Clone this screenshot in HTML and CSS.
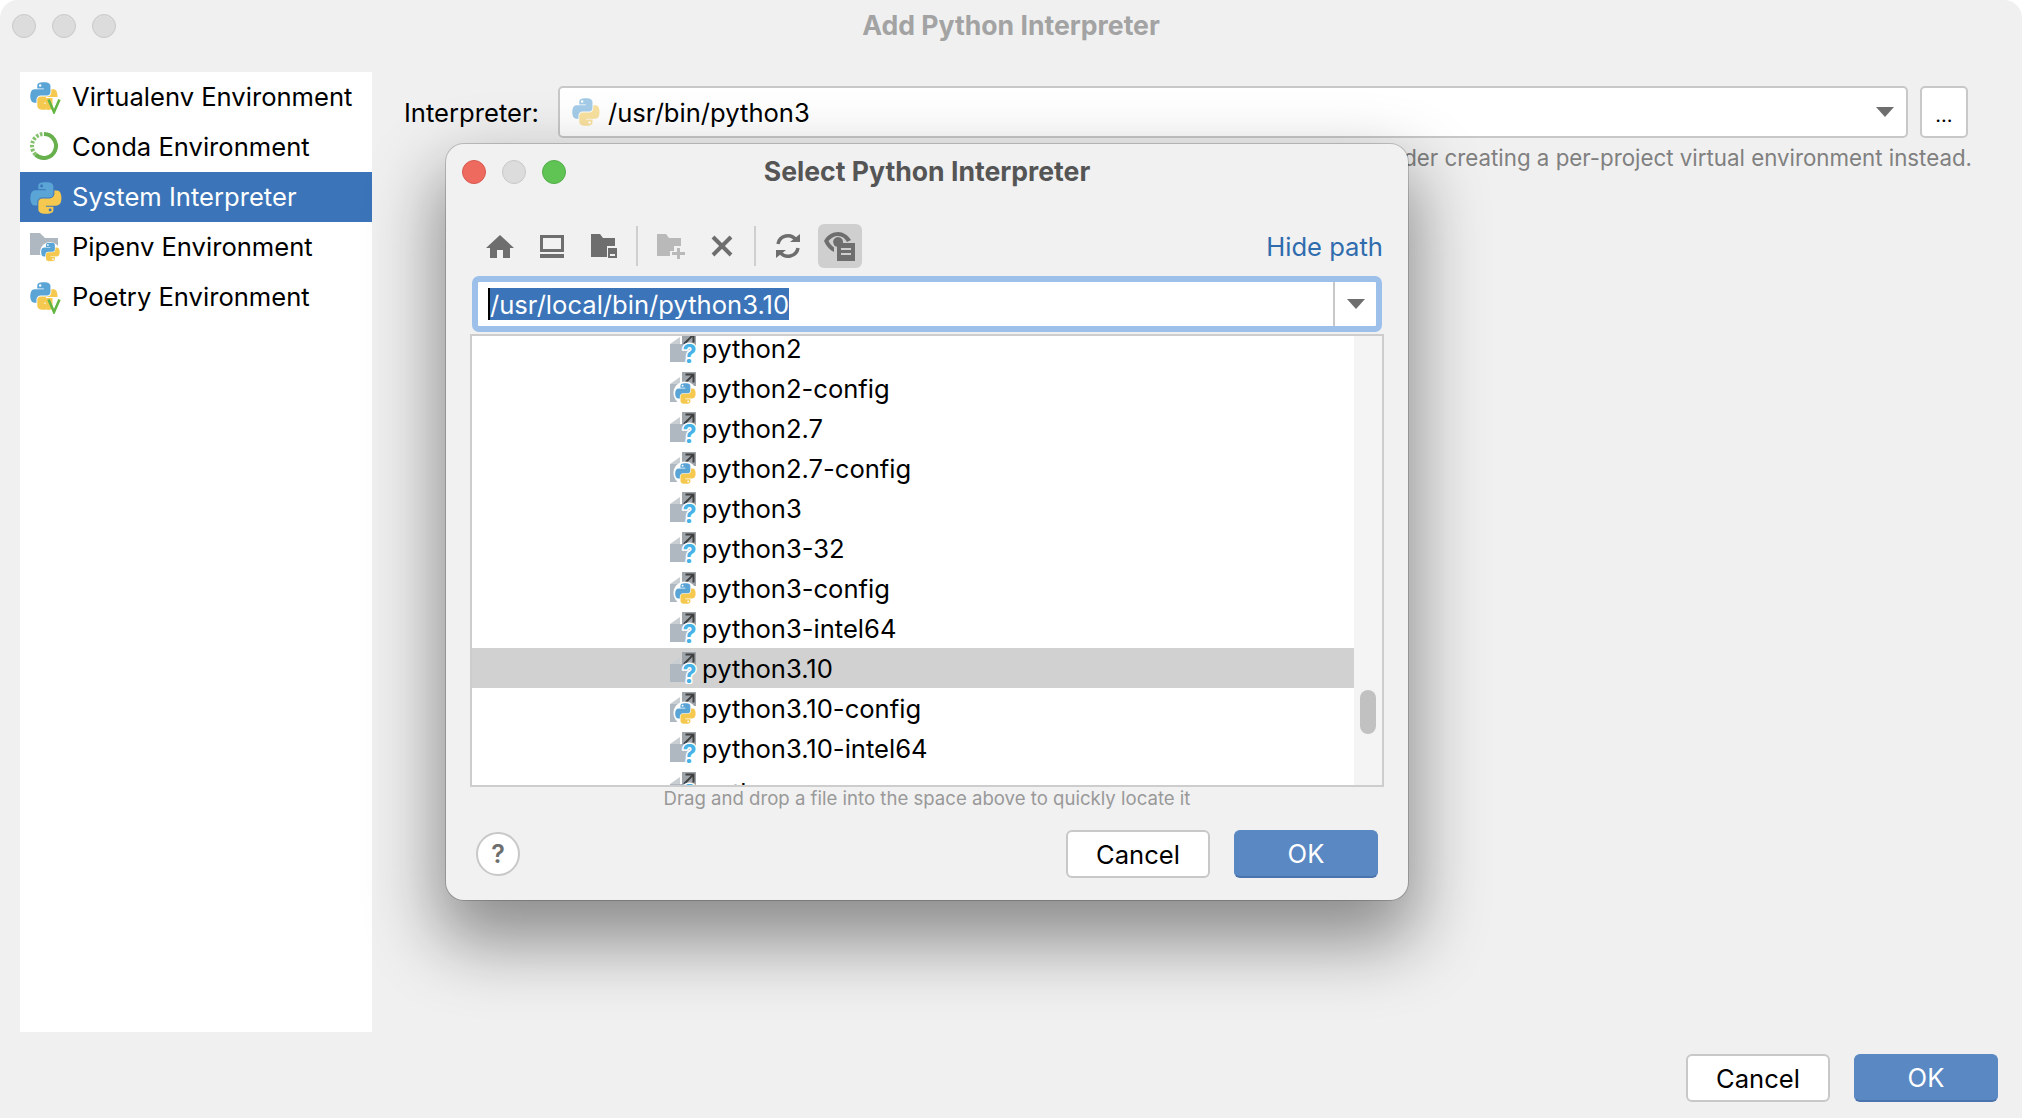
FILE: index.html
```html
<!DOCTYPE html>
<html lang="en">
<head>
<meta charset="utf-8">
<title>Add Python Interpreter</title>
<link rel="stylesheet" href="styles.css">
</head>
<body>
<svg class="defs" width="0" height="0" aria-hidden="true">
  <defs>
    <symbol id="py" viewBox="0 0 112 112">
      <path class="py-blue" fill-rule="evenodd" d="M54.9 .9C50.4 .9 46.1 1.3 42.3 2 31.1 4 29.1 8.1 29.1 15.7V25.8H55.5V29.2H19.3C11.6 29.2 4.9 33.8 2.8 42.5 .4 52.5 .3 58.8 2.8 69.2 4.7 77 9.1 82.6 16.8 82.6H25.8V70.5C25.8 61.8 33.4 54.1 42.3 54.1H68.6C75.9 54.1 81.8 48.1 81.8 40.8V15.7C81.8 8.6 75.8 3.2 68.6 2 63.5 1.2 59.3 .9 54.9 .9ZM40.6 9A5 5 0 1 1 40.6 19 5 5 0 1 1 40.6 9Z"/>
      <path class="py-yellow" fill-rule="evenodd" transform="rotate(180 55.5 56)" d="M54.9 .9C50.4 .9 46.1 1.3 42.3 2 31.1 4 29.1 8.1 29.1 15.7V25.8H55.5V29.2H19.3C11.6 29.2 4.9 33.8 2.8 42.5 .4 52.5 .3 58.8 2.8 69.2 4.7 77 9.1 82.6 16.8 82.6H25.8V70.5C25.8 61.8 33.4 54.1 42.3 54.1H68.6C75.9 54.1 81.8 48.1 81.8 40.8V15.7C81.8 8.6 75.8 3.2 68.6 2 63.5 1.2 59.3 .9 54.9 .9ZM40.6 9A5 5 0 1 1 40.6 19 5 5 0 1 1 40.6 9Z"/>
    </symbol>
    <symbol id="py-v" viewBox="0 0 32 32">
      <use href="#py" x="0" y="0" width="28" height="28"/>
      <path class="halo" d="M16 15H32V31H16Z"/>
      <path class="py-yellow" d="M16 16H22.500V25C22.500 27 21 28 18 28 17 28 16 27.500 16 26Z"/>
      <path class="v-mark" d="M18.500 17.500L24 30 29.500 17.500"/>
    </symbol>
    <symbol id="link-base" viewBox="0 0 28 32">
      <path class="doc-fold" d="M0 12L10 5V12Z"/>
      <path class="doc-body" d="M0 12H12V0H26V12H20V30H0Z"/>
      <path class="doc-box" d="M12 0H26V14H12Z"/>
      <path class="doc-arrow" d="M14 12L23 3M15.500 2.500H23.500V10.500"/>
    </symbol>
    <symbol id="file-unknown" viewBox="0 0 28 32">
      <use href="#link-base" width="28" height="32"/>
      <text class="q-mark" x="19.500" y="31">?</text>
    </symbol>
    <symbol id="file-py" viewBox="0 0 28 32">
      <use href="#link-base" width="28" height="32"/>
      <circle class="halo" cx="15" cy="21" r="11.500"/>
      <use href="#py" x="5" y="11" width="21" height="21"/>
    </symbol>
  </defs>
</svg>

<div class="window">
  <header class="titlebar">
    <div class="traffic">
      <span class="light"></span><span class="light"></span><span class="light"></span>
    </div>
    <div class="window-title">Add Python Interpreter</div>
  </header>

  <div class="body">
    <ul class="side">
      <li class="side-item"><svg class="ic-side"><use href="#py-v"/></svg><span>Virtualenv Environment</span></li>
      <li class="side-item">
        <svg class="ic-side" viewBox="0 0 32 32">
          <path class="conda-ring" d="M14 2A12 12 0 1 1 5.500 22.500"/>
          <path class="conda-dots" d="M5.500 22.500A12 12 0 0 1 14 2"/>
        </svg><span>Conda Environment</span></li>
      <li class="side-item is-selected"><svg class="ic-side"><use href="#py"/></svg><span>System Interpreter</span></li>
      <li class="side-item">
        <svg class="ic-side" viewBox="0 0 32 32">
          <path class="doc-body" d="M0 1H10L15 6H28V23H0Z"/>
          <circle class="halo" cx="20" cy="20" r="10"/>
          <use href="#py" x="11" y="10.500" width="19" height="19"/>
        </svg><span>Pipenv Environment</span></li>
      <li class="side-item"><svg class="ic-side"><use href="#py-v"/></svg><span>Poetry Environment</span></li>
    </ul>

    <section class="pane">
      <div class="interp-row">
        <label class="interp-label">Interpreter:</label>
        <div class="combo">
          <svg class="ic-combo"><use href="#py"/></svg>
          <span class="combo-text">/usr/bin/python3</span>
          <span class="caret"></span>
        </div>
        <button class="more">...</button>
      </div>
      <p class="note">Note: You'll have the same environment for all projects. Consider creating a per-project virtual environment instead.</p>
    </section>
  </div>

  <footer class="footer">
    <button class="btn">Cancel</button>
    <button class="btn btn-primary">OK</button>
  </footer>

  <div class="dialog">
    <div class="dialog-title">
      <div class="traffic traffic-dialog">
        <span class="light light-red"></span><span class="light"></span><span class="light light-green"></span>
      </div>
      <div class="dialog-name">Select Python Interpreter</div>
    </div>

    <div class="toolbar">
      <span class="tb">
        <svg width="28" height="24" viewBox="0 0 28 24"><path class="tool" d="M14 1L28 14H24V24H17V16H11V24H4V14H0Z"/></svg>
      </span>
      <span class="tb">
        <svg width="26" height="24" viewBox="0 0 26 24"><path class="tool" fill-rule="evenodd" d="M1 1H25V18H1ZM4 4V15H22V4ZM1 20H25V24H1Z"/></svg>
      </span>
      <span class="tb">
        <svg width="26" height="26" viewBox="0 0 26 26"><path class="tool" d="M0 1H9L12 5H24V13H16V24H0Z"/><path class="tool" fill-rule="evenodd" d="M17 15H26V25H17ZM19 21V23H24V21Z"/></svg>
      </span>
      <span class="tb-sep"></span>
      <span class="tb tb-narrow">
        <svg width="28" height="26" viewBox="0 0 28 26"><path class="tool-off" d="M0 1H9L12 5H24V13H17V18H13V23H0Z"/><path class="tool-off" d="M20 15H23V19H28V22H23V26H20V22H15V19H20Z"/></svg>
      </span>
      <span class="tb">
        <svg width="22" height="22" viewBox="0 0 22 22"><path class="tool-x" d="M2 2L20 20M20 2L2 20"/></svg>
      </span>
      <span class="tb-sep tb-sep-b"></span>
      <span class="tb">
        <svg width="26" height="26" viewBox="0 0 26 26"><path class="tool-line" d="M3 11A10 10 0 0 1 21 7M23 15A10 10 0 0 1 5 19"/><path class="tool" d="M15 9H25V1ZM11 17H1V25Z"/></svg>
      </span>
      <span class="tb tb-on">
        <svg width="32" height="30" viewBox="0 0 32 30"><path class="tool" fill-rule="evenodd" d="M0 10C3 4 9 1 14 1S24 4 27 9L23 11C21 7 18 5 14 5 10 5 7 7 4.500 10 6 13 8 15 10 16.500V21C6 19 2 15 0 10ZM14 6A5 5 0 1 1 10 14 5 5 0 0 1 14 6Z"/><path class="tool" fill-rule="evenodd" d="M13 12H31V30H13ZM17 17V19H27V17ZM17 22V24H27V22Z"/></svg>
      </span>
      <a class="hide-path">Hide path</a>
    </div>

    <div class="path-field">
      <div class="path-input"><span class="path-sel">/usr/local/bin/python3.10</span></div>
      <div class="path-drop"><span class="caret"></span></div>
    </div>

    <div class="tree">
      <ul class="tree-rows">
        <li class="row"><svg class="ic-file"><use href="#file-unknown"/></svg>python2</li>
        <li class="row"><svg class="ic-file"><use href="#file-py"/></svg>python2-config</li>
        <li class="row"><svg class="ic-file"><use href="#file-unknown"/></svg>python2.7</li>
        <li class="row"><svg class="ic-file"><use href="#file-py"/></svg>python2.7-config</li>
        <li class="row"><svg class="ic-file"><use href="#file-unknown"/></svg>python3</li>
        <li class="row"><svg class="ic-file"><use href="#file-unknown"/></svg>python3-32</li>
        <li class="row"><svg class="ic-file"><use href="#file-py"/></svg>python3-config</li>
        <li class="row"><svg class="ic-file"><use href="#file-unknown"/></svg>python3-intel64</li>
        <li class="row row-sel"><svg class="ic-file"><use href="#file-unknown"/></svg>python3.10</li>
        <li class="row"><svg class="ic-file"><use href="#file-py"/></svg>python3.10-config</li>
        <li class="row"><svg class="ic-file"><use href="#file-unknown"/></svg>python3.10-intel64</li>
        <li class="row row-last"><svg class="ic-file"><use href="#file-unknown"/></svg>pythonw</li>
      </ul>
      <div class="scroll"><span class="thumb"></span></div>
    </div>

    <p class="drag-hint">Drag and drop a file into the space above to quickly locate it</p>

    <div class="dialog-foot">
      <button class="help">?</button>
      <button class="btn btn-dialog">Cancel</button>
      <button class="btn btn-primary btn-dialog">OK</button>
    </div>
  </div>
</div>
</body>
</html>
```
FILE: styles.css
```css
* { box-sizing: border-box; }
html, body { margin: 0; padding: 0; height: 100%; background: #fff; }
body { font-family: Inter, "Liberation Sans", sans-serif; font-size: 25.6px; color: #000; overflow: hidden; }
ul { list-style: none; margin: 0; padding: 0; }
p { margin: 0; }
button { font: inherit; cursor: default; }
.defs { position: absolute; }

/* icon parts */
.py-blue { fill: #5aa4d6; }
.py-yellow { fill: #f5c94f; }
.halo { fill: #fff; }
.v-mark { fill: none; stroke: #62b543; stroke-width: 2.6; }
.conda-ring { fill: none; stroke: #68b04e; stroke-width: 4; }
.conda-dots { fill: none; stroke: #84c06e; stroke-width: 4; stroke-dasharray: 2.5 1.5; }
.doc-fold { fill: #c9ced3; }
.doc-body { fill: #afb8c1; }
.doc-box { fill: #9ea4aa; }
.doc-arrow { fill: none; stroke: #404040; stroke-width: 2; }
.q-mark { font-family: Inter, sans-serif; font-size: 25px; font-weight: 700; fill: #48b2e6; stroke: #fff; stroke-width: 3px; paint-order: stroke; text-anchor: middle; }
.tool { fill: #6e6e6e; }
.tool-off { fill: #b9b9b9; }
.tool-x { fill: none; stroke: #6e6e6e; stroke-width: 4; }
.tool-line { fill: none; stroke: #6e6e6e; stroke-width: 3.5; }

/* main window */
.window { position: relative; width: 2022px; height: 1118px; background: #f0f0f0; display: flex; flex-direction: column; border-radius: 18px 18px 0 0; overflow: hidden; }
.titlebar { height: 52px; flex: none; position: relative; display: flex; align-items: center; justify-content: center; padding-bottom: 3px; }
.traffic { position: absolute; left: 12px; top: 14px; display: flex; gap: 16px; }
.light { width: 24px; height: 24px; border-radius: 50%; background: #dcdcdc; border: 1px solid #c8c8c8; }
.window-title { font-size: 26.6px; font-weight: 700; color: #a3a3a3; }
.body { flex: none; height: 980px; padding: 20px 0 0 20px; display: flex; }
.side { width: 352px; height: 960px; background: #fff; flex: none; }
.side-item { height: 50px; display: flex; align-items: center; padding: 0 0 2px 10px; }
.side-item.is-selected { background: #3b74b8; color: #fff; }
.is-selected .py-blue { fill: #4f9bc8; }
.ic-side { width: 32px; height: 32px; margin-right: 10px; flex: none; position: relative; top: 2px; }
.pane { flex: 1; padding: 14px 54px 0 32px; position: relative; }
.interp-row { display: flex; align-items: center; height: 52px; }
.interp-label { width: 154px; flex: none; padding-top: 1px; }
.combo { width: 1350px; height: 52px; flex: none; background: #fff; border: 2px solid #c8c8c8; border-radius: 5px; display: flex; align-items: center; padding-left: 12px; }
.ic-combo { width: 28px; height: 28px; opacity: .55; margin-right: 8px; flex: none; }
.combo-text { flex: 1; padding-top: 1px; }
.caret { display: block; width: 0; height: 0; border-left: 9px solid transparent; border-right: 9px solid transparent; border-top: 10px solid #6e6e6e; margin-right: 12px; }
.more { width: 48px; height: 52px; margin-left: 12px; flex: none; background: #fff; border: 2px solid #c8c8c8; border-radius: 5px; padding: 6px 0 0; color: #000; font-size: 20px; }
.note { margin-top: 6px; font-size: 22.3px; color: #808080; white-space: nowrap; display: flex; justify-content: flex-end; margin-right: -4px; }
.footer { flex: none; height: 86px; padding: 22px 24px 0 0; display: flex; justify-content: flex-end; gap: 24px; align-items: flex-start; }
.btn { width: 144px; height: 48px; background: #fff; border: 2px solid #c8c8c8; border-radius: 6px; color: #000; padding: 0; }
.btn-primary { background: #5a88c3; border: 1px solid #5a88c3; border-bottom: 2px solid #4a74ab; color: #fff; }

/* dialog */
.dialog { position: absolute; left: 446px; top: 144px; width: 962px; height: 756px; background: #f1f1f1; border-radius: 18px; box-shadow: 0 0 0 1px rgba(0,0,0,.18), 0 34px 70px 8px rgba(0,0,0,.42); display: flex; flex-direction: column; }
.dialog-title { height: 56px; flex: none; position: relative; display: flex; align-items: center; justify-content: center; padding-bottom: 3px; }
.traffic-dialog { left: 16px; top: 16px; }
.light-red { background: #ee6a5f; border-color: #d8584e; }
.light-green { background: #60c454; border-color: #52ad47; }
.dialog-name { font-size: 26.6px; font-weight: 700; color: #555; }
.toolbar { height: 44px; margin-top: 24px; padding: 0 25px 0 32px; display: flex; align-items: center; gap: 8px; flex: none; }
.tb { width: 44px; height: 44px; flex: none; display: flex; align-items: center; justify-content: center; border-radius: 6px; }
.tb-narrow { width: 42px; }
.tb-on { background: #cfcfcf; }
.tb-sep { width: 2px; height: 40px; background: #cfcfcf; margin: 0 4px 0 2px; flex: none; }
.tb-sep-b { margin-right: 2px; }
.hide-path { margin-left: auto; color: #2f6cae; }
.path-field { height: 56px; margin: 8px 26px 0; flex: none; background: #fff; border: 6px solid #9cc0e9; border-radius: 7px; display: flex; align-items: center; }
.path-input { flex: 1; padding-left: 10px; display: flex; align-items: center; height: 100%; }
.path-sel { height: 32px; line-height: 33px; background: #3b74b8; color: #fff; border-left: 2px solid #000; white-space: nowrap; }
.path-drop { width: 43px; height: 100%; border-left: 2px solid #c8c8c8; display: flex; align-items: center; justify-content: center; }
.path-drop .caret { margin-right: 0; }
.tree { height: 453px; margin: 2px 24px 0; flex: none; background: #fff; border: 2px solid #cdcdcd; position: relative; overflow: hidden; display: flex; }
.tree-rows { flex: 1; margin-top: -8px; }
.row { height: 40px; display: flex; align-items: center; padding: 1px 0 0 198px; }
.row .ic-file { position: relative; top: -1px; }
.row-last { padding-top: 9px; }
.row-last .ic-file { top: -5px; }
.row-sel { background: #d1d1d1; }
.ic-file { width: 28px; height: 32px; margin-right: 4px; flex: none; }
.scroll { width: 28px; flex: none; background: #f4f4f4; padding: 354px 6px 0; }
.thumb { display: block; width: 16px; height: 44px; border-radius: 8px; background: #c1c1c1; }
.drag-hint { text-align: center; font-size: 18.6px; line-height: 22px; color: #999; flex: none; }
.dialog-foot { margin-top: 21px; padding: 0 30px 0 30px; display: flex; align-items: center; gap: 24px; flex: none; }
.help { width: 44px; height: 44px; border-radius: 50%; background: #fff; border: 2px solid #c8c8c8; padding: 0; color: #6e6e6e; font-size: 25px; font-weight: 600; margin-right: auto; }
```
